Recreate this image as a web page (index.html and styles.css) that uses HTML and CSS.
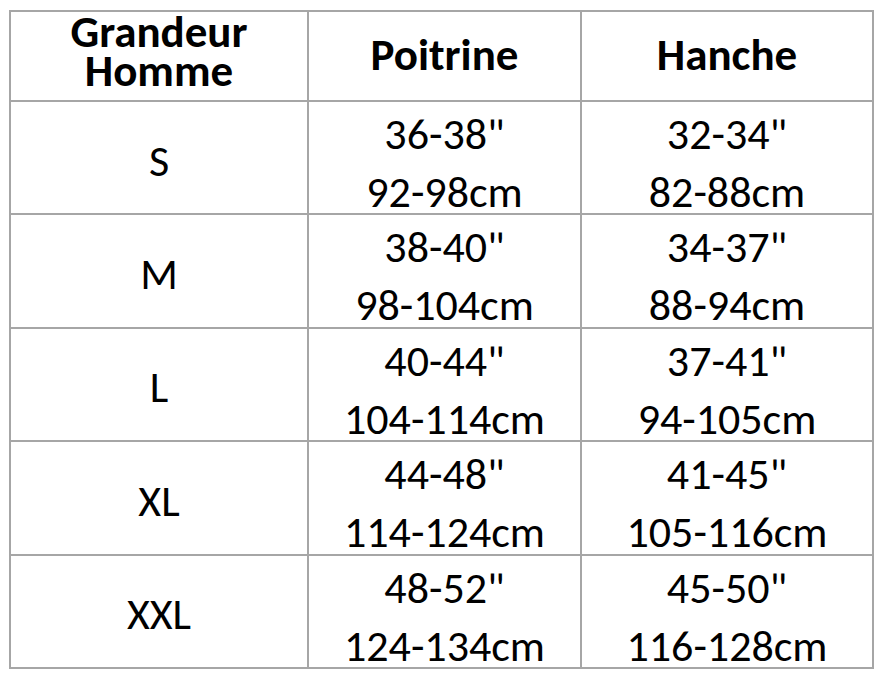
FILE: index.html
```html
<!DOCTYPE html>
<html lang="fr">
<head>
<meta charset="utf-8">
<title>Guide des tailles</title>
<link rel="stylesheet" href="styles.css">
</head>
<body>
<table class="sizes">
  <colgroup>
    <col class="c1"><col class="c2"><col class="c3">
  </colgroup>
  <thead>
    <tr class="head">
      <th class="first">Grandeur<br>Homme</th>
      <th>Poitrine</th>
      <th>Hanche</th>
    </tr>
  </thead>
  <tbody>
    <tr><td class="size">S</td><td><div class="val">36-38"<br>92-98cm</div></td><td><div class="val">32-34"<br>82-88cm</div></td></tr>
    <tr><td class="size">M</td><td><div class="val">38-40"<br>98-104cm</div></td><td><div class="val">34-37"<br>88-94cm</div></td></tr>
    <tr><td class="size">L</td><td><div class="val">40-44"<br>104-114cm</div></td><td><div class="val">37-41"<br>94-105cm</div></td></tr>
    <tr><td class="size">XL</td><td><div class="val">44-48"<br>114-124cm</div></td><td><div class="val">41-45"<br>105-116cm</div></td></tr>
    <tr><td class="size">XXL</td><td><div class="val">48-52"<br>124-134cm</div></td><td><div class="val">45-50"<br>116-128cm</div></td></tr>
  </tbody>
</table>
</body>
</html>
```

FILE: styles.css
```css
html, body {
  margin: 0;
  padding: 0;
  background: #ffffff;
}

body {
  padding: 10px 0 0 9px;
  font-family: Calibri, Carlito, Lato, "Open Sans", sans-serif;
  color: #000000;
}

.sizes {
  border-collapse: collapse;
  table-layout: fixed;
  width: 863px;
}

.c1 { width: 298px; }
.c2 { width: 273px; }
.c3 { width: 292px; }

.sizes th,
.sizes td {
  border: 2px solid #a6a6a6;
  text-align: center;
  vertical-align: middle;
  padding: 0;
}

.sizes th {
  font-weight: 700;
  font-size: 45px;
  line-height: 39px;
  height: 84px;
  padding-bottom: 4px;
}

.sizes th.first {
  height: 78px;
  padding-bottom: 10px;
}

.sizes td {
  font-size: 44px;
  height: 108.4px;
  line-height: 50px;
  vertical-align: top;
  padding-top: 3px;
  padding-bottom: 0;
}

.sizes td .val {
  line-height: 58px;
  height: 108.4px;
}

.sizes td.size {
  height: 105.4px;
  padding-top: 6px;
  vertical-align: middle;
}
```
